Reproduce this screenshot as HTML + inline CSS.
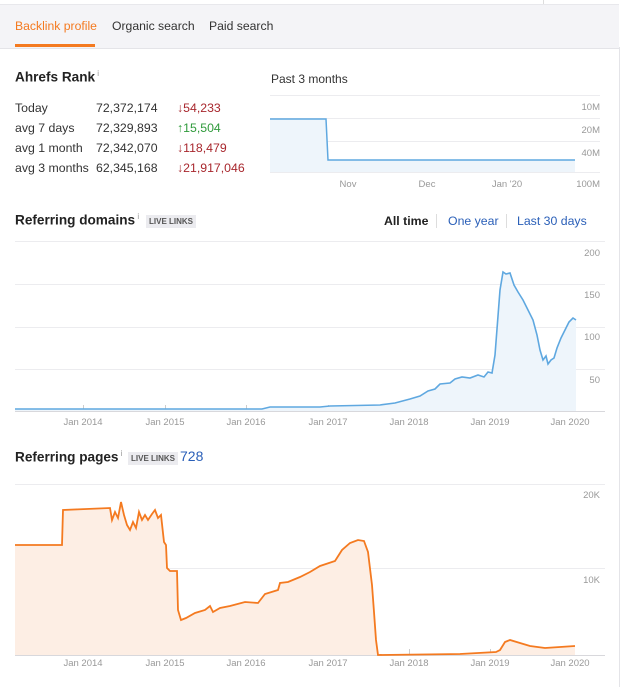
<!DOCTYPE html>
<html><head><meta charset="utf-8"><style>
body{margin:0;width:624px;height:687px;background:#fff;font-family:"Liberation Sans",Arial,sans-serif;position:relative;overflow:hidden}
.a{position:absolute;white-space:nowrap}
.hdr{position:absolute;left:0;top:4px;width:619px;height:43px;background:#f4f4f7;border-bottom:1px solid #e4e4e8;border-top:1px solid #e8e8ec}
.tab{position:absolute;top:19px;font-size:12.2px;color:#333}
.row{font-size:12.3px;color:#333}
.red{color:#a8272d}.grn{color:#2f9a3b}
.h{font-size:13.6px;font-weight:bold;color:#222}
.badge{font-size:8px;background:#ebebef;color:#555;padding:2px 3px;font-weight:bold}
.blue{color:#2a5fb8}
</style></head><body>
<div class="hdr"></div>
<div class="a" style="left:619px;top:47px;width:1px;height:640px;background:#e4e4e8"></div>
<div class="a" style="left:543px;top:0;width:1px;height:4px;background:#ddd"></div>
<div class="tab" style="left:15px;color:#f47a20">Backlink profile</div>
<div class="a" style="left:15px;top:44px;width:80px;height:3px;background:#f47a20"></div>
<div class="tab" style="left:112px">Organic search</div>
<div class="tab" style="left:209px">Paid search</div>

<div class="a h" style="left:15px;top:69px">Ahrefs Rank<sup style="font-size:8px;color:#999;font-weight:normal"> i</sup></div>
<div class="a row" style="left:15px;top:101px">Today</div><div class="a row" style="left:96px;top:101px">72,372,174</div><div class="a row red" style="left:177px;top:101px">↓54,233</div>
<div class="a row" style="left:15px;top:121px">avg 7 days</div><div class="a row" style="left:96px;top:121px">72,329,893</div><div class="a row grn" style="left:177px;top:121px">↑15,504</div>
<div class="a row" style="left:15px;top:141px">avg 1 month</div><div class="a row" style="left:96px;top:141px">72,342,070</div><div class="a row red" style="left:177px;top:141px">↓118,479</div>
<div class="a row" style="left:15px;top:161px">avg 3 months</div><div class="a row" style="left:96px;top:161px">62,345,168</div><div class="a row red" style="left:177px;top:161px">↓21,917,046</div>

<div class="a row" style="left:271px;top:72px;font-size:12px">Past 3 months</div>

<div class="a h" style="left:15px;top:212px">Referring domains<sup style="font-size:8px;color:#999;font-weight:normal"> i</sup></div>
<div class="a badge" style="left:146px;top:215px">LIVE LINKS</div>
<div class="a" style="left:384px;top:214px;font-size:12.3px;font-weight:bold;color:#222">All time</div>
<div class="a" style="left:436px;top:214px;width:1px;height:14px;background:#ddd"></div>
<div class="a blue" style="left:448px;top:214px;font-size:12.3px">One year</div>
<div class="a" style="left:506px;top:214px;width:1px;height:14px;background:#ddd"></div>
<div class="a blue" style="left:517px;top:214px;font-size:12.3px">Last 30 days</div>

<div class="a h" style="left:15px;top:449px">Referring pages<sup style="font-size:8px;color:#999;font-weight:normal"> i</sup></div>
<div class="a badge" style="left:128px;top:452px">LIVE LINKS</div>
<div class="a blue" style="left:180px;top:448px;font-size:14px">728</div>

<svg class="a" style="left:0;top:0" width="624" height="687">
<g stroke="#ececef" stroke-width="1">
<line x1="270" y1="95.5" x2="600" y2="95.5"/><line x1="270" y1="118.5" x2="600" y2="118.5"/><line x1="270" y1="141.5" x2="600" y2="141.5"/><line x1="270" y1="172.5" x2="600" y2="172.5"/>
<line x1="15" y1="241.5" x2="605" y2="241.5"/><line x1="15" y1="284.5" x2="605" y2="284.5"/><line x1="15" y1="327.5" x2="605" y2="327.5"/><line x1="15" y1="369.5" x2="605" y2="369.5"/>
<line x1="15" y1="484.5" x2="605" y2="484.5"/><line x1="15" y1="568.5" x2="605" y2="568.5"/>
</g>
<g stroke="#d8d8dc"><line x1="15" y1="411.5" x2="605" y2="411.5"/><line x1="15" y1="655.5" x2="605" y2="655.5"/>
<g stroke="#ccc"><line x1="83.5" y1="405" x2="83.5" y2="411"/><line x1="165.5" y1="405" x2="165.5" y2="411"/><line x1="246.5" y1="405" x2="246.5" y2="411"/><line x1="328.5" y1="405" x2="328.5" y2="411"/><line x1="409.5" y1="405" x2="409.5" y2="411"/><line x1="490.5" y1="405" x2="490.5" y2="411"/>
<line x1="83.5" y1="649" x2="83.5" y2="655"/><line x1="165.5" y1="649" x2="165.5" y2="655"/><line x1="246.5" y1="649" x2="246.5" y2="655"/><line x1="328.5" y1="649" x2="328.5" y2="655"/><line x1="409.5" y1="649" x2="409.5" y2="655"/><line x1="490.5" y1="649" x2="490.5" y2="655"/></g></g>
<path d="M270 119 L326 119 L328 160 L575 160 L575 172 L270 172Z" fill="#eef5fb"/>
<path d="M270 119 L326 119 L328 160 L575 160" fill="none" stroke="#5fa8e0" stroke-width="1.5"/>
<path d="M15 409 L262 409 L270 407 L320 407 L330 406 L380 405 L395 403 L410 399 L420 396 L428 391 L435 389 L440 384 L450 383 L455 379 L462 377 L470 378 L478 375 L484 377 L488 372 L492 373 L495 355 L500 290 L503 272 L506 274 L510 273 L514 285 L518 292 L523 300 L528 310 L533 320 L537 335 L540 350 L543 360 L546 356 L548 364 L551 360 L554 358 L557 348 L561 338 L565 330 L569 322 L573 318 L576 320 L576 411 L15 411Z" fill="#eef5fb"/>
<path d="M15 409 L262 409 L270 407 L320 407 L330 406 L380 405 L395 403 L410 399 L420 396 L428 391 L435 389 L440 384 L450 383 L455 379 L462 377 L470 378 L478 375 L484 377 L488 372 L492 373 L495 355 L500 290 L503 272 L506 274 L510 273 L514 285 L518 292 L523 300 L528 310 L533 320 L537 335 L540 350 L543 360 L546 356 L548 364 L551 360 L554 358 L557 348 L561 338 L565 330 L569 322 L573 318 L576 320" fill="none" stroke="#5fa8e0" stroke-width="1.6"/>
<path d="M15 545 L62 545 L63 510 L110 508 L112 520 L115 512 L118 518 L121 502 L124 515 L127 525 L130 530 L133 522 L136 528 L139 512 L142 520 L145 515 L148 520 L152 514 L155 510 L158 518 L161 515 L164 542 L166 545 L167 568 L170 571 L177 571 L178 610 L181 620 L186 618 L195 613 L205 610 L210 606 L213 612 L220 608 L230 606 L245 602 L258 603 L265 594 L278 590 L280 583 L288 582 L300 577 L310 572 L320 566 L335 561 L342 550 L350 543 L358 540 L364 541 L368 552 L372 585 L374 612 L376 640 L378 655 L460 654 L496 652 L500 650 L505 642 L510 640 L520 643 L530 646 L545 648 L560 647 L575 646 L575 655 L15 655Z" fill="#fdeee4"/>
<path d="M15 545 L62 545 L63 510 L110 508 L112 520 L115 512 L118 518 L121 502 L124 515 L127 525 L130 530 L133 522 L136 528 L139 512 L142 520 L145 515 L148 520 L152 514 L155 510 L158 518 L161 515 L164 542 L166 545 L167 568 L170 571 L177 571 L178 610 L181 620 L186 618 L195 613 L205 610 L210 606 L213 612 L220 608 L230 606 L245 602 L258 603 L265 594 L278 590 L280 583 L288 582 L300 577 L310 572 L320 566 L335 561 L342 550 L350 543 L358 540 L364 541 L368 552 L372 585 L374 612 L376 640 L378 655 L460 654 L496 652 L500 650 L505 642 L510 640 L520 643 L530 646 L545 648 L560 647 L575 646" fill="none" stroke="#f47a20" stroke-width="1.8"/>
<g font-family="Liberation Sans,Arial,sans-serif" font-size="9.5" fill="#999" text-anchor="end">
<text x="600" y="110">10M</text><text x="600" y="133">20M</text><text x="600" y="156">40M</text><text x="600" y="187">100M</text>
<text x="600" y="256">200</text><text x="600" y="298">150</text><text x="600" y="340">100</text><text x="600" y="383">50</text>
<text x="600" y="498">20K</text><text x="600" y="583">10K</text>
</g>
<g font-family="Liberation Sans,Arial,sans-serif" font-size="9.5" fill="#999" text-anchor="middle">
<text x="348" y="187">Nov</text><text x="427" y="187">Dec</text><text x="507" y="187">Jan '20</text>
<text x="83" y="425">Jan 2014</text><text x="165" y="425">Jan 2015</text><text x="246" y="425">Jan 2016</text><text x="328" y="425">Jan 2017</text><text x="409" y="425">Jan 2018</text><text x="490" y="425">Jan 2019</text><text x="570" y="425">Jan 2020</text>
<text x="83" y="666">Jan 2014</text><text x="165" y="666">Jan 2015</text><text x="246" y="666">Jan 2016</text><text x="328" y="666">Jan 2017</text><text x="409" y="666">Jan 2018</text><text x="490" y="666">Jan 2019</text><text x="570" y="666">Jan 2020</text>
</g>
</svg>
</body></html>
